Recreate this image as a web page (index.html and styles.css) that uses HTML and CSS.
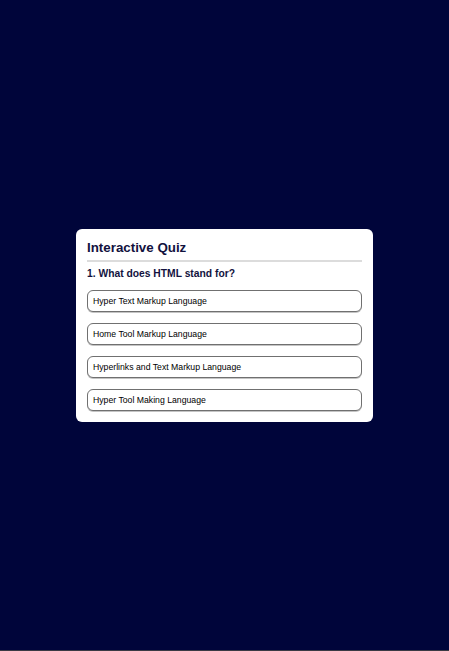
FILE: index.html
```html
<!DOCTYPE html>
<html lang="en">
<head>
<meta charset="utf-8">
<title>Interactive Quiz</title>
<link rel="stylesheet" href="styles.css">
</head>
<body>
<main class="stage">
  <section class="quiz">
    <h1 class="quiz-title">Interactive Quiz</h1>
    <h2 class="question">1. What does HTML stand for?</h2>
    <div class="options">
      <button class="option">Hyper Text Markup Language</button>
      <button class="option">Home Tool Markup Language</button>
      <button class="option">Hyperlinks and Text Markup Language</button>
      <button class="option">Hyper Tool Making Language</button>
    </div>
  </section>
</main>
<div class="edge"></div>
</body>
</html>
```
FILE: styles.css
```css
html, body {
  margin: 0;
  padding: 0;
  background: #00053a;
}
body {
  font-family: "Liberation Sans", Arial, sans-serif;
  display: flex;
  flex-direction: column;
}
.stage {
  height: 650px;
  display: flex;
  align-items: center;
  justify-content: center;
}
.edge {
  height: 1px;
  background: #3a3a44;
}
.quiz {
  width: 275px;
  background: #fff;
  border-radius: 6px;
  padding: 11px;
}
.quiz-title {
  margin: 0;
  font-size: 13.33px;
  line-height: 16px;
  font-weight: bold;
  color: #12123e;
  padding-bottom: 4px;
  border-bottom: 2px solid #dcdcdc;
}
.question {
  margin: 6px 0 0;
  font-size: 10.3px;
  line-height: 12px;
  font-weight: bold;
  color: #12123e;
}
.options {
  display: flex;
  flex-direction: column;
  gap: 11px;
  margin-top: 10px;
}
.option {
  display: block;
  width: 100%;
  height: 22px;
  box-sizing: border-box;
  text-align: left;
  background: #fff;
  border: 1px solid #707070;
  border-radius: 6px;
  padding: 0 5px;
  font-family: "Liberation Sans", Arial, sans-serif;
  font-size: 8.7px;
  color: #000;
  box-shadow: 0 1px 0 #c4c4c4;
}
```
